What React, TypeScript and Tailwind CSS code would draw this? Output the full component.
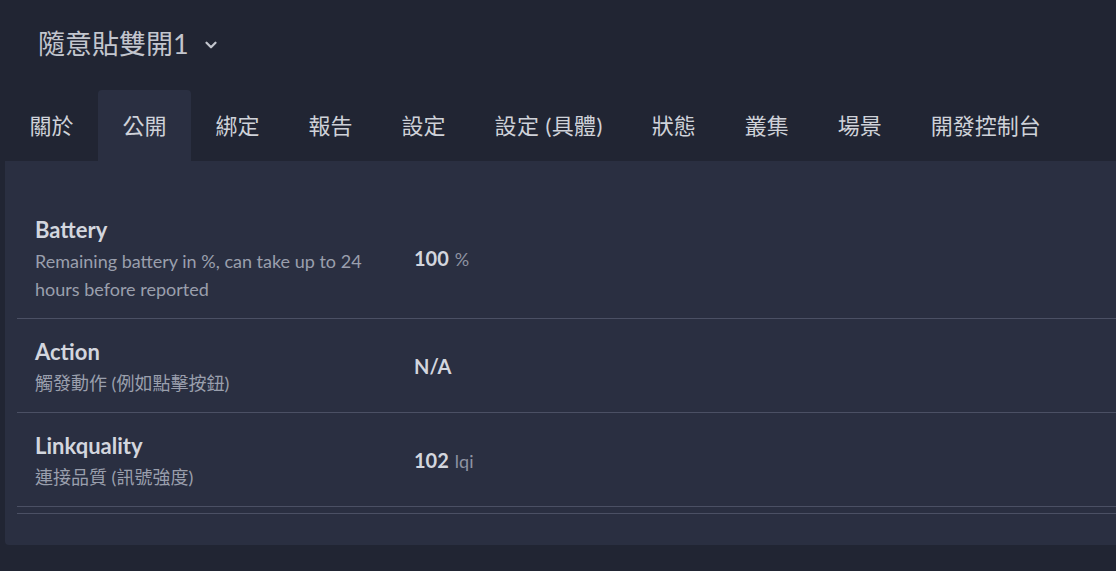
import React from 'react';
import { ChevronDown } from 'lucide-react';

const font = { fontFamily: '"Lato", "Noto Sans CJK TC", sans-serif' };

const tabs = ['關於', '公開', '綁定', '報告', '設定', '設定 (具體)', '狀態', '叢集', '場景', '開發控制台'];

type Row = { name: string; desc: string; value: string; unit?: string };

const rows: Row[] = [
  { name: 'Battery', desc: 'Remaining battery in %, can take up to 24 hours before reported', value: '100', unit: '%' },
  { name: 'Action', desc: '觸發動作 (例如點擊按鈕)', value: 'N/A' },
  { name: 'Linkquality', desc: '連接品質 (訊號強度)', value: '102', unit: 'lqi' },
];

function ExposeRow({ row }: { row: Row }) {
  return (
    <div className="flex items-center border-b border-[#4b5064] pl-[18px] pt-[16px] pb-[15px]">
      <div className="w-[379px] shrink-0 pr-[30px]">
        <div className="text-[22px] leading-[34px] font-bold text-[#d3d6de]">{row.name}</div>
        <div className="text-[18px] leading-[28px] text-[#9a9fad]">{row.desc}</div>
      </div>
      <div className="flex items-baseline gap-[6px]">
        <span className="text-[20px] font-bold text-[#d3d6de]">{row.value}</span>
        {row.unit && <span className="text-[18px] text-[#8e93a2]">{row.unit}</span>}
      </div>
    </div>
  );
}

export default function App() {
  return (
    <div className="w-full h-[571px] overflow-hidden bg-[#212533]" style={font}>
      <div className="flex items-center h-[90px] pl-[38px] pb-[2px]">
        <span className="text-[27px] text-[#c3c6ce]">隨意貼雙開1</span>
        <ChevronDown className="ml-[13px] mt-[2px] text-[#c3c6ce]" size={18} strokeWidth={3} />
      </div>
      <div className="flex pl-[5px] h-[71px]">
        {tabs.map((t, i) => (
          <div
            key={t}
            className={`flex items-center px-[24.5px] text-[22px] text-[#cfd2d9] rounded-t-[4px] ${i === 1 ? 'bg-[#2a2f41]' : ''} ${i === 5 ? 'tracking-[0.4px]' : ''}`}
          >
            {t}
          </div>
        ))}
      </div>
      <div className="ml-[5px] bg-[#2a2f41] rounded-bl-[4px] pt-[36px] pl-[12px] pb-[31px]">
        {rows.map((r) => (
          <ExposeRow key={r.name} row={r} />
        ))}
        <div className="h-[7px] border-b border-[#4b5064]" />
      </div>
    </div>
  );
}
